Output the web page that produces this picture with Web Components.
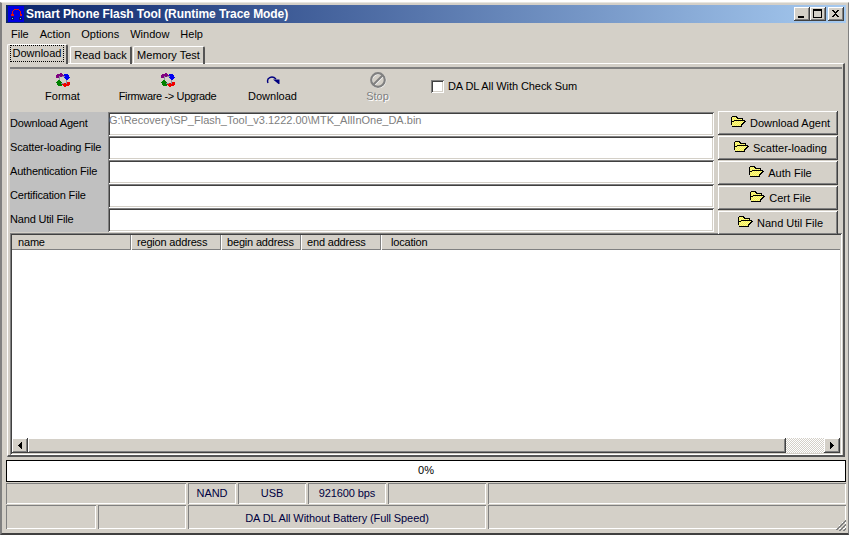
<!DOCTYPE html>
<html>
<head>
<meta charset="utf-8">
<title>Smart Phone Flash Tool</title>
<style>
html, body { margin: 0; padding: 0; background: #fff; }
body { font: 11px "Liberation Sans", Arial, sans-serif; color: #000; overflow: hidden; }
</style>
</head>
<body>
<flash-window>
    <title-bar slot="title">Smart Phone Flash Tool (Runtime Trace Mode)</title-bar>
    <menu-bar slot="menu"></menu-bar>
    <tab-strip slot="tabs"></tab-strip>

    <tool-button slot="tools" icon="sync">Format</tool-button>
    <tool-button slot="tools" icon="sync" style="letter-spacing:-0.35px">Firmware -&gt; Upgrade</tool-button>
    <tool-button slot="tools" icon="redo">Download</tool-button>
    <tool-button slot="tools" icon="stop" disabled>Stop</tool-button>
    <check-box slot="tools">DA DL All With Check Sum</check-box>

    <file-row slot="fields" label="Download Agent" value="G:\Recovery\SP_Flash_Tool_v3.1222.00\MTK_AllInOne_DA.bin"></file-row>
    <file-row slot="fields" label="Scatter-loading File"></file-row>
    <file-row slot="fields" label="Authentication File"></file-row>
    <file-row slot="fields" label="Certification File"></file-row>
    <file-row slot="fields" label="Nand Util File"></file-row>

    <browse-button slot="buttons">Download Agent</browse-button>
    <browse-button slot="buttons">Scatter-loading</browse-button>
    <browse-button slot="buttons">Auth File</browse-button>
    <browse-button slot="buttons">Cert File</browse-button>
    <browse-button slot="buttons">Nand Util File</browse-button>

    <list-view slot="list"></list-view>
    <progress-bar slot="progress">0%</progress-bar>
    <status-bar slot="status"></status-bar>
</flash-window>

<script>
(function() {
    const FACE = '#d4d0c8';
    const RAISED = 'box-shadow: inset -1px -1px #404040, inset 1px 1px #fff, inset -2px -2px #808080, inset 2px 2px ' + FACE + ';';
    const SUNKEN = 'box-shadow: inset 1px 1px #808080, inset -1px -1px #fff, inset 2px 2px #404040, inset -2px -2px ' + FACE + ';';

    // purple and blue arrows, the red and green ones are the same shapes turned round
    const PURPLE = 'M4 0h2v1h1v1h1v1H6v1H4V3H3v2H0V2h1V1h3z';
    const BLUE = 'M8 1h4v1h1v2h1v1h-1v1h-1v1h-2V6H9V5H8V4h1V3H8z';

    const ICONS = {
        sync: `<svg width="14" height="14" viewBox="0 0 14 14" shape-rendering="crispEdges">
            <path d="M3 3h8v1H3zM3 10h8v1H3zM3 3h1v8H3zM10 3h1v8h-1z" fill="#8c8ca4"/>
            <path d="${PURPLE}" fill="#800080"/>
            <path d="${BLUE}" fill="#0000f0"/>
            <path d="${PURPLE}" fill="#f00000" transform="rotate(180 7 7)"/>
            <path d="${BLUE}" fill="#008000" transform="rotate(180 7 7)"/>
        </svg>`,
        redo: `<svg width="14" height="10" viewBox="0 0 14 10">
            <path d="M2 8C0 3 6 0 10 4" fill="none" stroke="#000080" stroke-width="1.4"/>
            <path d="M7 4.5h6.5v-1V9h-1z" fill="#000080"/>
        </svg>`,
        stop: `<svg width="18" height="18" viewBox="0 0 18 18">
            <circle cx="9.5" cy="9.5" r="6.8" fill="none" stroke="#fff" stroke-width="2"/>
            <path d="M5.5 13.5L13.5 5.5" stroke="#fff" stroke-width="2"/>
            <circle cx="9" cy="9" r="6.8" fill="none" stroke="#808080" stroke-width="2.2"/>
            <path d="M4.5 13.5L13.5 4.5" stroke="#808080" stroke-width="2.2"/>
        </svg>`,
        folder: `<svg width="15" height="11" viewBox="0 0 15 11" shape-rendering="crispEdges">
            <defs><pattern id="d" width="2" height="2" patternUnits="userSpaceOnUse">
                <rect width="2" height="2" fill="#ffff80"/><rect width="1" height="1" fill="#f0e860"/><rect x="1" y="1" width="1" height="1" fill="#f0e860"/>
            </pattern></defs>
            <path d="M1 1h5v2h5v2h3v1l-3 4H1z" fill="url(#d)"/>
            <path d="M1 0h5v1h1v1h5v3h-1V3H6V2H5V1H1v4h1v1H1v3H0V1h1zM3 4h11v1h1v1h-1v1h-1v1h-1v1h-1v2H1v-1h9V8h1V7h1V6h1V5H3v1H2V5h1z" fill="#000"/>
        </svg>`
    };

    function shadow(el, html) {
        el.attachShadow({mode: 'open'});
        el.shadowRoot.innerHTML = html;
    }

    class FlashWindow extends HTMLElement {
        constructor() {
            super();
            shadow(this, `
<style>
:host { display: flex; flex-direction: column; box-sizing: border-box; width: 849px; height: 533px; margin-top: 2px;
        background: ${FACE}; padding: 1px 2px 0 4px;
        border-top: 1px solid #e8e6e0; border-right: 1px solid #808080; border-left: 2px solid #808080;
        box-shadow: 1px 0 #fff; border-bottom: 2px solid #404040; }
.pane { margin: 0 1px 0 1px; height: 394px; flex: none; box-sizing: border-box; border-top: 1px solid #fff; border-left: 1px solid #fff; border-right: 2px solid #555; border-bottom: 2px solid #555; padding: 3px 1px 0 2px; }
.inner { border-top: 2px solid #808080; }
.toolbar { display: flex; align-items: flex-start; height: 42px; }
.form { display: flex; align-items: flex-start; height: 122px; }
.fields { flex: 0 0 704px; padding-top: 1px; }
.buttons { flex: 0 0 120px; height: 124px; margin-left: 4px; display: flex; flex-direction: column; gap: 1px; position: relative; z-index: 1; }
</style>
<slot name="title"></slot>
<slot name="menu"></slot>
<slot name="tabs"></slot>
<div class="pane"><div class="inner">
  <div class="toolbar"><slot name="tools"></slot></div>
  <div class="form">
    <div class="fields"><slot name="fields"></slot></div>
    <div class="buttons"><slot name="buttons"></slot></div>
  </div>
  <slot name="list"></slot>
</div></div>
<slot name="progress"></slot>
<slot name="status"></slot>`);
        }
    }

    class TitleBar extends HTMLElement {
        constructor() {
            super();
            const box = (glyph) => `<span class="b">${glyph}</span>`;
            shadow(this, `
<style>
:host { display: flex; align-items: center; flex: none; height: 18px; padding: 0 2px 0 2px; margin-top: 1px; color: #fff; font-weight: bold; font-size: 12px; letter-spacing: -0.07px;
        background: linear-gradient(90deg, #0a246a, #a6caf0); }
svg.app { flex: none; margin-right: 2px; }
.text { flex: 1; white-space: nowrap; }
.b { display: block; width: 16px; height: 14px; background: ${FACE}; ${RAISED} position: relative; }
.b svg { position: absolute; left: 0; top: 0; }
.c { display: flex; }
.c .b:last-child { margin-left: 2px; }
</style>
<svg class="app" width="16" height="16" viewBox="0 0 16 16" shape-rendering="crispEdges">
  <rect width="16" height="16" fill="#0000e0"/>
  <path d="M5 4h1V3h5v1h1v1h1v3h-1V5h-1V4H6v1H5v3H4V5h1z" fill="#e01010"/>
  <path d="M3 8h3v2H3zM12 8h2v2h-2z" fill="#e01010"/>
  <path d="M3 11h3v3H3zM11 11h3v3h-3z" fill="#101060"/>
  <path d="M4 12h1v1H4zM12 12h1v1h-1z" fill="#60d0f0"/>
</svg>
<span class="text"><slot></slot></span>
<span class="c">
${box('<svg width="16" height="14" shape-rendering="crispEdges"><rect x="4" y="9" width="6" height="2"/></svg>')}
${box('<svg width="16" height="14" shape-rendering="crispEdges"><path d="M3 2h9v9H3zM4 4v6h7V4z" fill-rule="evenodd"/></svg>')}
${box('<svg width="16" height="14" shape-rendering="crispEdges"><path d="M4 3h2v1h1v1h1V4h1V3h2v1h-1v1H9v1H8v1h1v1h1v1h1v1H9V9H8V8H7v1H6v1H4V9h1V8h1V7h1V6H6V5H5V4H4z"/></svg>')}
</span>`);
        }
    }

    class MenuBar extends HTMLElement {
        constructor() {
            super();
            const items = ['File', 'Action', 'Options', 'Window', 'Help'];
            shadow(this, `
<style>
:host { display: flex; flex: none; height: 21px; align-items: center; padding-left: 5px; gap: 11px; }
</style>
${items.map(i => `<span>${i}</span>`).join('')}`);
        }
    }

    class TabStrip extends HTMLElement {
        constructor() {
            super();
            shadow(this, `
<style>
:host { display: flex; flex: none; height: 20px; align-items: flex-end; padding-left: 1px; margin-bottom: -1px; position: relative; z-index: 1; }
.t { box-sizing: border-box; height: 18px; padding-top: 2px; margin-left: 1px; text-align: center; line-height: 13px; border-top: 1px solid #fff; border-left: 1px solid #fff; border-right: 2px solid #555; border-radius: 2px 2px 0 0; white-space: nowrap; }
.on { width: 61px; height: 20px; margin: 0 1px 0 0; padding-top: 1px; background: ${FACE}; }
.f { outline: 1px dotted #000; display: inline-block; line-height: 15px; padding: 0 2px; }
</style>
<div class="t on"><span class="f">Download</span></div><div class="t" style="width:62px">Read back</div><div class="t" style="width:72px">Memory Test</div>`);
        }
    }

    class ToolButton extends HTMLElement {
        constructor() {
            super();
            const off = this.hasAttribute('disabled');
            shadow(this, `
<style>
:host { display: flex; flex-direction: column; align-items: center; flex: 0 0 105px; height: 40px; box-sizing: border-box; padding-top: 3px; white-space: nowrap; }
.i { height: 16px; display: flex; align-items: center; justify-content: center; }
.l { margin-top: 2px; ${off ? 'color: #808080; text-shadow: 1px 1px #fff;' : ''} }
</style>
<div class="i">${ICONS[this.getAttribute('icon')]}</div>
<div class="l"><slot></slot></div>`);
        }
    }

    class CheckBox extends HTMLElement {
        constructor() {
            super();
            shadow(this, `
<style>
:host { display: flex; align-items: center; gap: 4px; margin: 10px 0 0 1px; height: 14px; white-space: nowrap; letter-spacing: -0.08px; }
.b { width: 13px; height: 13px; box-sizing: border-box; background: #fff; ${SUNKEN} }
</style>
<div class="b"></div><slot></slot>`);
        }
    }

    class FileRow extends HTMLElement {
        constructor() {
            super();
            const value = this.getAttribute('value') || '';
            shadow(this, `
<style>
:host { display: flex; height: 24px; }
.l { flex: 0 0 98px; box-sizing: border-box; padding: 5px 0 0 0; background: #c0c0c0; white-space: nowrap; letter-spacing: -0.18px; }
.f { flex: 1; box-sizing: border-box; background: #fff; ${SUNKEN} padding: 2px 1px; color: #808080; white-space: nowrap; overflow: hidden; }
</style>
<div class="l">${this.getAttribute('label')}</div><div class="f">${value}</div>`);
        }
    }

    class BrowseButton extends HTMLElement {
        constructor() {
            super();
            shadow(this, `
<style>
:host { display: flex; flex: 1; align-items: center; justify-content: center; gap: 4px; padding-left: 5px; background: ${FACE}; ${RAISED} white-space: nowrap; }
svg { margin-top: -3px; }
</style>
${ICONS.folder}<slot></slot>`);
        }
    }

    class ListView extends HTMLElement {
        constructor() {
            super();
            const cols = [['name', 119, 6], ['region address', 90, 6], ['begin address', 80, 6], ['end address', 80, 6], ['location', 0, 10]];
            shadow(this, `
<style>
:host { display: flex; flex-direction: column; box-sizing: border-box; height: 222px; background: #fff; ${SUNKEN} padding: 2px; }
.head { display: flex; height: 15px; background: ${FACE}; flex: none; box-shadow: inset 0 -1px #808080; letter-spacing: -0.18px; }
.head span { box-sizing: border-box; border-right: 1px solid #808080; box-shadow: 1px 0 #fff; white-space: nowrap; line-height: 15px; }
.head span:last-child { flex: 1; border: 0; box-shadow: none; }
.body { flex: 1; }
.sb { flex: none; display: flex; height: 15px; background: ${FACE}; }
.a { flex: 0 0 16px; ${RAISED} display: flex; align-items: center; justify-content: center; }
.thumb { flex: 0 0 758px; ${RAISED} }
.track { flex: 1; background: repeating-conic-gradient(${FACE} 0 25%, #fff 0 50%) 0 0 / 2px 2px; }
</style>
<div class="head">${cols.map(c => `<span style="${c[1] ? 'flex:0 0 ' + c[1] + 'px;' : ''}padding-left:${c[2]}px">${c[0]}</span>`).join('')}</div>
<div class="body"></div>
<div class="sb">
  <div class="a"><svg width="4" height="7" shape-rendering="crispEdges"><path d="M3 0h1v7H3V6H2V5H1V4H0V3h1V2h1V1h1z"/></svg></div>
  <div class="thumb"></div>
  <div class="track"></div>
  <div class="a"><svg width="4" height="7" shape-rendering="crispEdges"><path d="M0 0h1v1h1v1h1v1h1v1H3v1H2v1H1v1H0z"/></svg></div>
</div>`);
        }
    }

    class ProgressBar extends HTMLElement {
        constructor() {
            super();
            shadow(this, `
<style>
:host { display: block; flex: none; box-sizing: border-box; height: 22px; margin-top: 3px; background: #fff; border: 1px solid #000; text-align: center; line-height: 18px; }
</style>
<slot></slot>`);
        }
    }

    class StatusBar extends HTMLElement {
        constructor() {
            super();
            const row = (cells) => cells.map(c => `<div class="s" style="flex:${c[0] ? '0 0 ' + c[0] + 'px' : '1'}">${c[1] || ''}</div>`).join('');
            shadow(this, `
<style>
:host { display: block; flex: none; margin-top: 1px; color: #000040; position: relative; letter-spacing: -0.1px; }
.r { display: flex; gap: 2px; height: 21px; margin-bottom: 1px; }
.r + .r { height: 24px; margin-bottom: 0; }
.s { box-sizing: border-box; box-shadow: inset 1px 1px #808080, inset -1px -1px #fff; text-align: center; line-height: 21px; white-space: nowrap; }
.r + .r .s { line-height: 26px; }
svg { position: absolute; right: 0; bottom: -2px; }
</style>
<div class="r">${row([[180], [48, 'NAND'], [68, 'USB'], [78, '921600 bps'], [98], [0]])}</div>
<div class="r">${row([[90], [88], [298, 'DA DL All Without Battery (Full Speed)'], [0]])}</div>
<svg width="12" height="12" shape-rendering="crispEdges"><path d="M11 0v1h1V0zM8 3v1h1V3zM5 6v1h1V6z" fill="#fff"/><path d="M11 1h1v2h-1v1h-1v1H9v1H8v1H7v1H6v1H5v1H4v1H2v-1h1V9h1V8h1V7h1V6h1V5h1V4h1V3h1V2h1zM11 5h1v2h-1v1h-1v1H9v1H8v1H7v1H5v-1h1v-1h1V9h1V8h1V7h1V6h1zM11 9h1v2h-1v1H9v-1h1v-1h1z" fill="#808080"/></svg>`);
        }
    }

    customElements.define('flash-window', FlashWindow);
    customElements.define('title-bar', TitleBar);
    customElements.define('menu-bar', MenuBar);
    customElements.define('tab-strip', TabStrip);
    customElements.define('tool-button', ToolButton);
    customElements.define('check-box', CheckBox);
    customElements.define('file-row', FileRow);
    customElements.define('browse-button', BrowseButton);
    customElements.define('list-view', ListView);
    customElements.define('progress-bar', ProgressBar);
    customElements.define('status-bar', StatusBar);
})();
</script>
</body>
</html>
